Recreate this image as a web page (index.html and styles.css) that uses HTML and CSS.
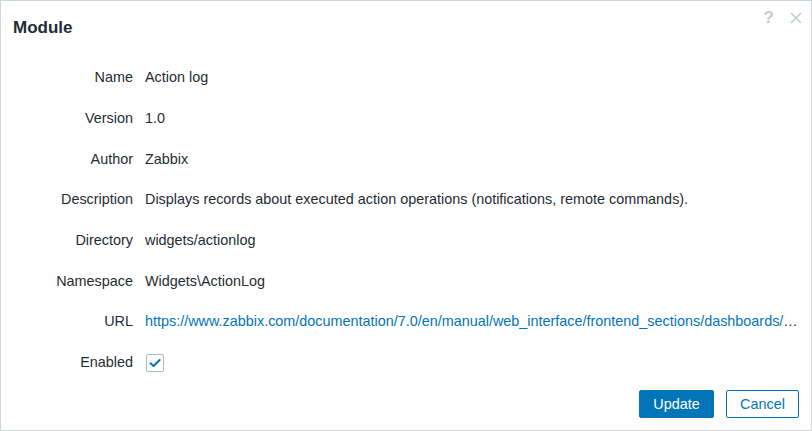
FILE: index.html
```html
<!DOCTYPE html>
<html lang="en">
<head>
<meta charset="utf-8">
<title>Module</title>
<link rel="stylesheet" href="styles.css">
</head>
<body>
<div class="dialog">
  <div class="dialog-header">
    <h4 class="dialog-title">Module</h4>
    <div class="header-tools">
      <span class="help-btn">?</span>
      <svg class="close-btn" width="12" height="12" viewBox="0 0 12 12"><path d="M1 1 L11 11 M11 1 L1 11" stroke="#c3cbd1" stroke-width="1.6" fill="none"/></svg>
    </div>
  </div>
  <div class="form-grid">
    <div class="label">Name</div><div class="value">Action log</div>
    <div class="label">Version</div><div class="value">1.0</div>
    <div class="label">Author</div><div class="value">Zabbix</div>
    <div class="label">Description</div><div class="value">Displays records about executed action operations (notifications, remote commands).</div>
    <div class="label">Directory</div><div class="value">widgets/actionlog</div>
    <div class="label">Namespace</div><div class="value">Widgets\ActionLog</div>
    <div class="label">URL</div><div class="value"><a class="link" href="#">https://www.zabbix.com/documentation/7.0/en/manual/web_interface/frontend_sections/dashboards/widgets/action_log</a></div>
    <div class="label">Enabled</div><div class="value"><span class="checkbox"><svg width="12" height="10" viewBox="0 0 12 10"><path d="M1.5 5.2 L4.6 8 L10.6 2" stroke="#0275b8" stroke-width="2" fill="none" stroke-linecap="round" stroke-linejoin="round"/></svg></span></div>
  </div>
  <div class="dialog-footer">
    <button class="btn btn-primary">Update</button>
    <button class="btn btn-alt">Cancel</button>
  </div>
</div>
</body>
</html>
```
FILE: styles.css
```css
* { box-sizing: border-box; }
html, body { margin: 0; padding: 0; background: #fff; }
body {
  font-family: "Liberation Sans", Arial, sans-serif;
  font-size: 14.4px;
  color: #1f2c33;
}
.dialog {
  width: 812px;
  height: 431px;
  border: 1px solid #cdd6dc;
  border-right-color: #d3d7da;
  border-bottom-color: #d3d7da;
  background: #fff;
  display: flex;
  flex-direction: column;
}
.dialog-header {
  display: flex;
  justify-content: space-between;
  align-items: flex-start;
  padding: 17px 9px 0 12px;
}
.dialog-title {
  margin: 0;
  font-size: 17px;
  line-height: 20px;
  font-weight: bold;
  color: #1f2c33;
}
.header-tools {
  display: flex;
  align-items: center;
  gap: 16px;
  margin-top: -9px;
}
.help-btn {
  font-size: 17px;
  font-weight: bold;
  color: #c3cbd1;
  line-height: 18px;
}
.close-btn { display: block; }
.form-grid {
  display: grid;
  grid-template-columns: 132px minmax(0, 1fr);
  grid-auto-rows: 40.7px;
  column-gap: 12px;
  align-items: center;
  padding-right: 12px;
  margin-top: 19px;
}
.label {
  text-align: right;
  line-height: 18px;
}
.value {
  line-height: 18px;
  white-space: nowrap;
  overflow: hidden;
  text-overflow: ellipsis;
  min-width: 0;
}
.link {
  color: #0275b8;
  text-decoration: none;
}
.checkbox {
  display: inline-flex;
  align-items: center;
  justify-content: center;
  width: 18px;
  height: 18px;
  border: 1px solid #acb8bf;
  border-radius: 2px;
  margin-left: 1px;
  vertical-align: middle;
}
.dialog-footer {
  display: flex;
  justify-content: flex-end;
  gap: 12px;
  padding: 0 12px 0 0;
  margin-top: 7px;
}
.btn {
  font-family: "Liberation Sans", Arial, sans-serif;
  font-size: 14.4px;
  height: 28px;
  padding: 0;
  border-radius: 2px;
  cursor: pointer;
}
.btn-primary {
  background: #0275b8;
  color: #fff;
  border: 1px solid #0275b8;
  width: 75px;
}
.btn-alt {
  background: #fff;
  color: #0275b8;
  border: 1px solid #0275b8;
  width: 73px;
}
```
